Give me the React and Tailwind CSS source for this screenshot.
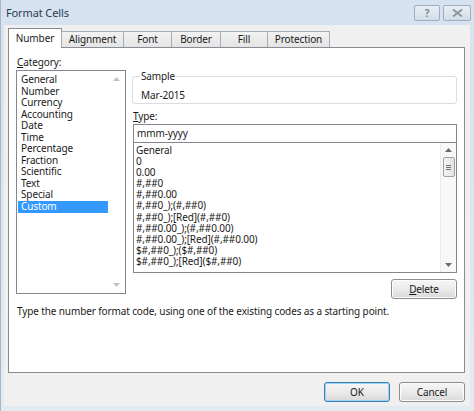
const categories = [
  'General', 'Number', 'Currency', 'Accounting', 'Date', 'Time',
  'Percentage', 'Fraction', 'Scientific', 'Text', 'Special', 'Custom',
];

const formats = [
  'General', '0', '0.00', '#,##0', '#,##0.00', '#,##0_);(#,##0)',
  '#,##0_);[Red](#,##0)', '#,##0.00_);(#,##0.00)', '#,##0.00_);[Red](#,##0.00)',
  '$#,##0_);($#,##0)', '$#,##0_);[Red]($#,##0)',
];

const tabs = [
  { label: 'Number', w: 'w-[54px]' },
  { label: 'Alignment', w: 'w-[63px]' },
  { label: 'Font', w: 'w-[49px]' },
  { label: 'Border', w: 'w-[50px]' },
  { label: 'Fill', w: 'w-[48px]' },
  { label: 'Protection', w: 'w-[63px]' },
];

const Arrow = ({ down, color = '#8a8a8a' }) => (
  <svg width="7" height="4" viewBox="0 0 7 4">
    {down ? <path d="M0 0h7L3.5 4z" fill={color} /> : <path d="M0 4h7L3.5 0z" fill={color} />}
  </svg>
);

const Button = ({ children, focused, className = '' }) => (
  <button
    className={`h-[20px] w-[66px] rounded-[3px] border text-[10px] text-[#1a1a1a] bg-gradient-to-b from-[#f6f6f6] via-[#ebebeb] to-[#d9d9d9] ${
      focused ? 'border-[#3c7fb1] shadow-[inset_0_0_0_1px_#9fd3f5]' : 'border-[#8d8d8d] shadow-[inset_0_0_0_1px_#fcfcfc]'
    } ${className}`}
  >
    {children}
  </button>
);

export default function App() {
  return (
    <div className="w-[474px] h-[411px] bg-gradient-to-b from-[#d6e2f0] to-[#e3eaf2] font-['Noto_Sans','Open_Sans',sans-serif] tracking-[-0.12px] text-[#1a1a1a] overflow-hidden flex flex-col border-l border-[#aab6c4]">
      {/* Title bar */}
      <div className="h-[25px] flex items-start justify-between pl-[5px] pr-[3px]">
        <span className="mt-[5px] text-[11px] text-[#2d3d52]">Format Cells</span>
        <div className="flex gap-[3px] mt-[5px]">
          <div className="w-[26px] h-[16px] rounded-[2px] border border-[#9fadbe] bg-gradient-to-b from-[#e9eef4] to-[#d3dde8] flex items-center justify-center text-[10px] leading-none text-[#7d8896] font-bold">?</div>
          <div className="w-[28px] h-[16px] rounded-[2px] border border-[#9fadbe] bg-gradient-to-b from-[#e9eef4] to-[#d3dde8] flex items-center justify-center">
            <svg width="11" height="8" viewBox="0 0 11 8">
              <path d="M1 0.5L10 7.5M10 0.5L1 7.5" stroke="#8d97a4" strokeWidth="2" />
            </svg>
          </div>
        </div>
      </div>

      {/* Client */}
      <div className="flex-1 ml-[3px] mr-[4px] mb-[5px] bg-[#f0f0f0] pl-[4px] pr-[5px] pt-[3px] flex flex-col">
        {/* Tabs */}
        <div className="flex items-end h-[19px] relative z-10">
          {tabs.map((t, i) =>
            i === 0 ? (
              <div key={t.label} className={`${t.w} h-[20px] -mb-[1px] border border-b-0 border-[#898c95] bg-white flex items-center justify-center text-[10px]`}>
                {t.label}
              </div>
            ) : (
              <div key={t.label} className={`${t.w} h-[16px] -ml-[1px] border border-b-0 border-[#a9acb3] bg-gradient-to-b from-[#f3f3f3] to-[#e4e4e4] flex items-center justify-center text-[10px]`}>
                {t.label}
              </div>
            )
          )}
        </div>

        {/* Panel */}
        <div className="h-[326px] border border-[#898c95] bg-white flex flex-col">
          <div className="flex gap-[7px] pl-[7px] pt-[8px]">
            {/* Category column */}
            <div className="w-[110px] flex flex-col">
              <div className="ml-[1px] text-[10px] leading-[13px] mb-[1px]">
                <span className="underline">C</span>ategory:
              </div>
              <div className="h-[224px] border border-[#828790] flex">
                <div className="flex-1 pt-[3px] pl-[1px]">
                  {categories.map((c) => (
                    <div
                      key={c}
                      className={`h-[11.55px] leading-[11.55px] text-[10px] pl-[3px] ${c === 'Custom' ? 'bg-[#3399ff] text-white' : ''}`}
                    >
                      {c}
                    </div>
                  ))}
                </div>
                <div className="w-[17px] flex flex-col items-center justify-between py-[6px]">
                  <Arrow color="#c2c2c2" />
                  <Arrow down color="#c2c2c2" />
                </div>
              </div>
            </div>

            {/* Right column */}
            <div className="w-[324px] flex flex-col pt-[14px]">
              <fieldset className="h-[34px] border border-[#d5dfe5] rounded-[3px] pl-[7px] -ml-[1px]">
                <legend className="px-[1px] text-[10px] leading-[12px]">Sample</legend>
                <div className="text-[10px] leading-[12px] mt-[7px] ml-[1px]">Mar-2015</div>
              </fieldset>
              <div className="mt-[6px] text-[10px] leading-[13px]">
                <span className="underline">T</span>ype:
              </div>
              <div className="mt-[1px] h-[19px] border border-[#828790] px-[3px] text-[10px] leading-[17px]">mmm-yyyy</div>
              <div className="h-[131px] -mt-[1px] border border-[#828790] flex">
                <div className="flex-1 pt-[2px] pl-[2px] overflow-hidden">
                  {formats.map((f, i) => (
                    <div key={i} className="h-[11.1px] leading-[11.1px] text-[10px] whitespace-nowrap">
                      {f}
                    </div>
                  ))}
                </div>
                <div className="w-[16px] flex flex-col items-center py-[5px] bg-[#f8f8f8] border-l border-[#ececec]">
                  <Arrow color="#6b6b6b" />
                  <div className="mt-[5px] w-[12px] h-[20px] rounded-[2px] border border-[#a0a0a0] bg-gradient-to-r from-[#f4f4f4] to-[#e2e2e2] flex flex-col items-center justify-center gap-[1px]">
                    <div className="w-[5px] h-px bg-[#707070]" />
                    <div className="w-[5px] h-px bg-[#707070]" />
                    <div className="w-[5px] h-px bg-[#707070]" />
                  </div>
                  <div className="flex-1" />
                  <Arrow down color="#6b6b6b" />
                </div>
              </div>
              <div className="flex justify-end mt-[6px]">
                <Button className="w-[65px]">
                  <span className="underline">D</span>elete
                </Button>
              </div>
            </div>
          </div>
          <div className="pl-[8px] mt-[6px] text-[10px] leading-[13px]">
            Type the number format code, using one of the existing codes as a starting point.
          </div>
        </div>

        {/* Footer buttons */}
        <div className="flex justify-end gap-[9px] mt-[9px]">
          <Button focused>OK</Button>
          <Button>Cancel</Button>
        </div>
      </div>
    </div>
  );
}
